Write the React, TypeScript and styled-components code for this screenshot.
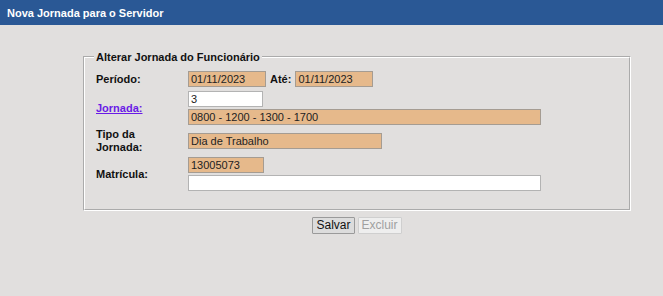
import React from 'react';
import styled, { createGlobalStyle } from 'styled-components';

const GlobalStyle = createGlobalStyle`
  html, body {
    margin: 0;
    padding: 0;
    background: #e1dfde;
    font-family: 'Liberation Sans', Arial, sans-serif;
    font-size: 11px;
    color: #111;
  }
`;

const Header = styled.div`
  height: 25px;
  background: #2a5895;
  color: #fff;
  font-weight: bold;
  font-size: 11px;
  display: flex;
  align-items: center;
  padding-left: 7px;
`;

const Content = styled.div`
  padding: 26px 0 0 83px;
  width: 548px;
`;

const Fieldset = styled.fieldset`
  margin: 0;
  padding: 8px 11px 18px 11px;
  border: 2px groove #ffffff;
  min-width: 0;
`;

const Legend = styled.legend`
  font-weight: bold;
  padding: 0 2px;
  margin-left: -2px;
`;

const Form = styled.div`
  display: grid;
  grid-template-columns: 92px 1fr;
  row-gap: 3px;
  align-items: center;
`;

const Label = styled.div`
  font-weight: bold;
  line-height: 13px;
`;

const LinkLabel = styled.a`
  font-weight: bold;
  color: #6a1be6;
  text-decoration: underline;
  cursor: pointer;
`;

const Fields = styled.div`
  display: flex;
  flex-direction: column;
  gap: 2px;
`;

const Inline = styled.div<{ spaced?: boolean }>`
  display: flex;
  align-items: center;
  gap: 4px;
  margin-bottom: ${(p) => (p.spaced ? 1 : 0)}px;
`;

const Input = styled.div<{ w: number; filled?: boolean }>`
  box-sizing: border-box;
  width: ${(p) => p.w}px;
  height: 16px;
  line-height: 14px;
  padding: 0 2px;
  border: 1px solid ${(p) => (p.filled ? '#a59c92' : '#b3b3b3')};
  background: ${(p) => (p.filled ? '#e6b98b' : '#ffffff')};
  color: #222;
  white-space: nowrap;
  overflow: hidden;
`;

const Actions = styled.div`
  display: flex;
  justify-content: center;
  gap: 3px;
  margin-top: 6px;
`;

const Button = styled.button<{ disabled?: boolean }>`
  font-family: 'Liberation Sans', Arial, sans-serif;
  font-size: 12px;
  height: 17px;
  line-height: 13px;
  padding: 0 3px;
  border: 1px solid ${(p) => (p.disabled ? '#cfcfcf' : '#9a9a9a')};
  background: ${(p) => (p.disabled ? '#eeeeee' : '#dcdcdc')};
  color: ${(p) => (p.disabled ? '#a0a0a0' : '#111')};
  border-radius: 1px;
`;

export default function App() {
  return (
    <>
      <GlobalStyle />
      <Header>Nova Jornada para o Servidor</Header>
      <Content>
        <Fieldset>
          <Legend>Alterar Jornada do Funcionário</Legend>
          <Form>
            <Label>Período:</Label>
            <Inline spaced>
              <Input w={78} filled>01/11/2023</Input>
              <Label>Até:</Label>
              <Input w={78} filled>01/11/2023</Input>
            </Inline>

            <Label>
              <LinkLabel>Jornada:</LinkLabel>
            </Label>
            <Fields>
              <Input w={75}>3</Input>
              <Input w={353} filled>0800 - 1200 - 1300 - 1700</Input>
            </Fields>

            <Label>
              Tipo da
              <br />
              Jornada:
            </Label>
            <Input w={194} filled>Dia de Trabalho</Input>

            <Label>Matrícula:</Label>
            <Fields>
              <Input w={76} filled>13005073</Input>
              <Input w={353}></Input>
            </Fields>
          </Form>
        </Fieldset>
        <Actions>
          <Button>Salvar</Button>
          <Button disabled>Excluir</Button>
        </Actions>
      </Content>
    </>
  );
}
